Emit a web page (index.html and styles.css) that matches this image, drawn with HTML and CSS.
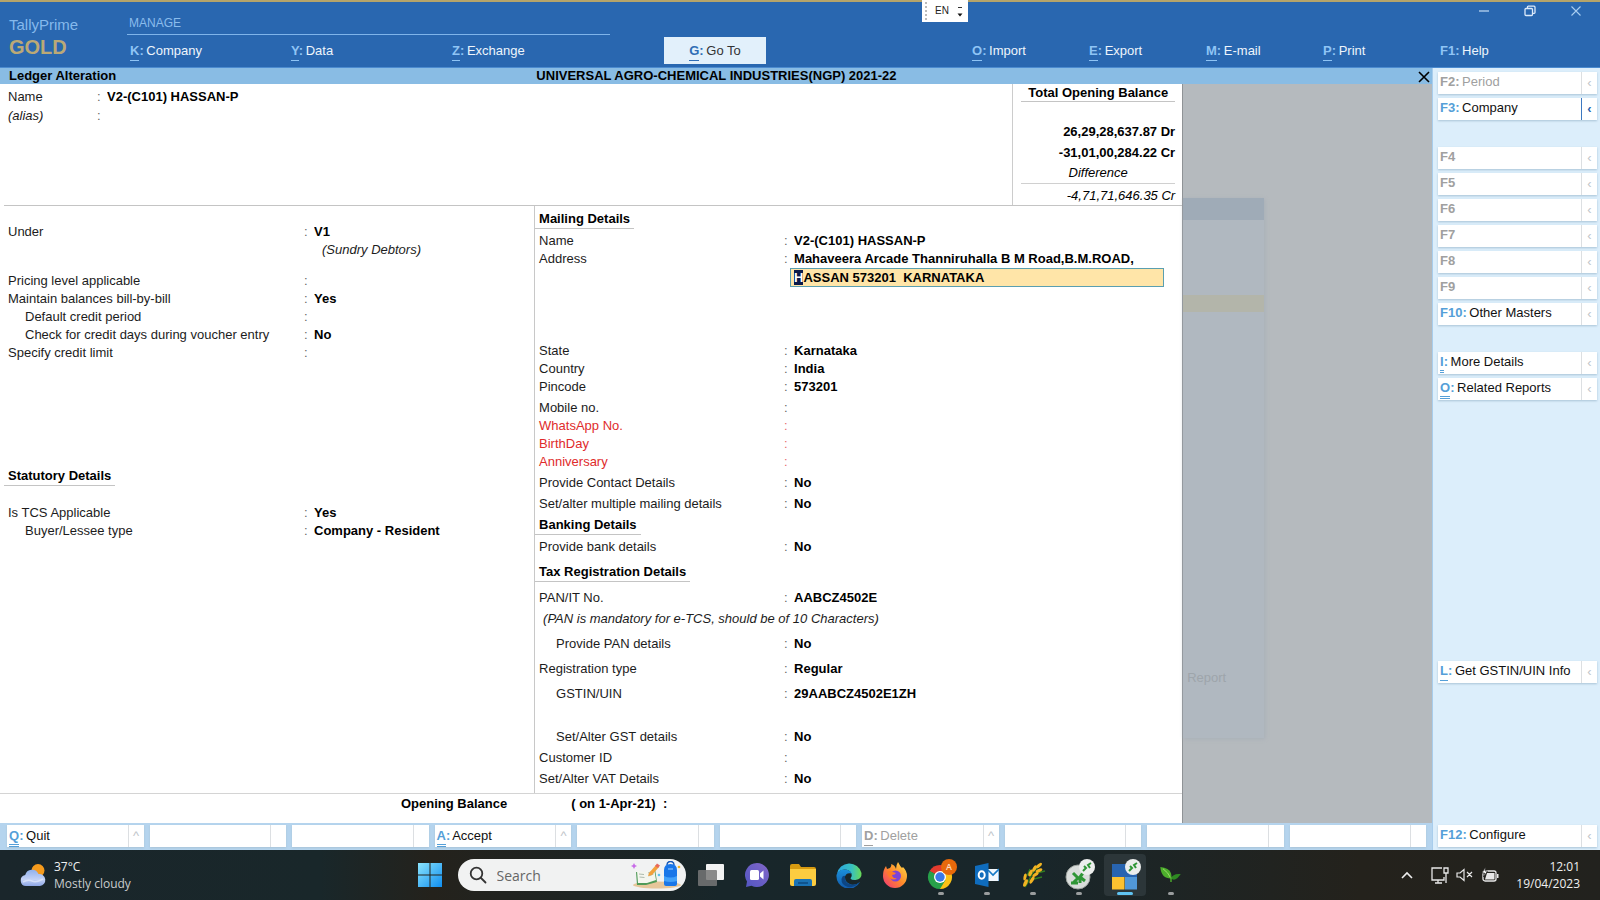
FILE: index.html
```html
<!DOCTYPE html>
<html lang="en">
<head>
    <meta charset="UTF-8">
    <meta name="viewport" content="width=device-width, initial-scale=1.0">
    <title>TallyPrime GOLD - Ledger Alteration</title>
    <link rel="stylesheet" href="styles.css">
</head>
<body>
    <!-- Top menu -->
    <header class="top-bar">
        <div class="brand">
            <span class="brand-name">TallyPrime</span>
            <span class="brand-edition">GOLD</span>
        </div>
        <nav class="manage">
            <h2>MANAGE</h2>
            <div class="manage-items">
                <button class="menu-item"><b><u>K</u>:</b> Company</button>
                <button class="menu-item"><b><u>Y</u>:</b> Data</button>
                <button class="menu-item"><b><u>Z</u>:</b> Exchange</button>
            </div>
        </nav>
        <button class="menu-item go-to"><b><u>G</u>:</b> Go To</button>
        <div class="top-right">
            <div class="window-controls">
                <button aria-label="Minimize"><svg width="12" height="12" viewBox="0 0 12 12"><path d="M1 6h10" stroke="#c4dcf5" stroke-width="1.2"/></svg></button>
                <button aria-label="Restore"><svg width="12" height="12" viewBox="0 0 12 12" fill="none" stroke="#dceafa" stroke-width="1.3"><rect x="1" y="3.5" width="7.5" height="7" rx="1"/><path d="M3.5 3.5V2q0-.8.8-.8H10q1 0 1 1V7.500q0 .8-.8.8H8.500"/></svg></button>
                <button aria-label="Close window"><svg width="12" height="12" viewBox="0 0 12 12"><path d="M1.500 1.500l9 9M10.500 1.500l-9 9" stroke="#a9cdf0" stroke-width="1.100"/></svg></button>
            </div>
            <nav class="right-items">
                <button class="menu-item"><b><u>O</u>:</b> Import</button>
                <button class="menu-item"><b><u>E</u>:</b> Export</button>
                <button class="menu-item"><b><u>M</u>:</b> E-mail</button>
                <button class="menu-item"><b><u>P</u>:</b> Print</button>
                <button class="menu-item"><b>F1:</b> Help</button>
            </nav>
        </div>
        <button class="lang-bar" aria-label="Input language">
            <span class="grip"></span>
            <span>EN</span>
            <svg width="6" height="12" viewBox="0 0 6 12"><path d="M1 2.500h4" stroke="#333"/><path d="M0.500 8.500h5l-2.500 3z" fill="#111"/></svg>
        </button>
    </header>

    <div class="workspace">
        <div class="screen">
            <div class="title-bar">
                <span>Ledger Alteration</span>
                <h1>UNIVERSAL AGRO-CHEMICAL INDUSTRIES(NGP) 2021-22</h1>
                <button class="close-screen" aria-label="Close">
                    <svg width="14" height="14" viewBox="0 0 14 14"><path d="M2 2l10 10M12 2L2 12" stroke="#000" stroke-width="1.600"/></svg>
                </button>
            </div>

            <div class="stage">
                <form class="ledger">
                    <div class="ledger-head">
                        <div class="name-fields">
                            <div class="field"><label for="name">Name</label><input id="name" value="V2-(C101) HASSAN-P"></div>
                            <div class="field"><label for="alias"><i>(alias)</i></label><input id="alias"></div>
                        </div>
                        <div class="opening">
                            <h3>Total Opening Balance</h3>
                            <p class="amount">26,29,28,637.87 Dr</p>
                            <p class="amount">-31,01,00,284.22 Cr</p>
                            <p class="difference">Difference</p>
                            <p class="net">-4,71,71,646.35 Cr</p>
                        </div>
                    </div>

                    <div class="ledger-body">
                        <section class="left-pane">
                            <div class="field"><label for="under">Under</label><input id="under" value="V1"></div>
                            <p class="group-note">(Sundry Debtors)</p>
                            <div class="field gap-l"><label for="pricing">Pricing level applicable</label><input id="pricing"></div>
                            <div class="field"><label for="billwise">Maintain balances bill-by-bill</label><input id="billwise" value="Yes"></div>
                            <div class="field sub"><label for="period">Default credit period</label><input id="period"></div>
                            <div class="field sub"><label for="check">Check for credit days during voucher entry</label><input id="check" value="No"></div>
                            <div class="field"><label for="limit">Specify credit limit</label><input id="limit"></div>

                            <h3 class="section-title statutory">Statutory Details</h3>
                            <div class="field gap-xl"><label for="tcs">Is TCS Applicable</label><input id="tcs" value="Yes"></div>
                            <div class="field sub"><label for="buyer">Buyer/Lessee type</label><input id="buyer" value="Company - Resident"></div>
                        </section>

                        <section class="right-pane">
                            <h3 class="section-title">Mailing Details</h3>
                            <div class="field gap-s"><label for="mail-name">Name</label><input id="mail-name" value="V2-(C101) HASSAN-P"></div>
                            <div class="field"><label for="address">Address</label><input id="address" value="Mahaveera Arcade Thanniruhalla B M Road,B.M.ROAD,"></div>
                            <input id="address-2" class="active-field" aria-label="Address line 2" value="HASSAN 573201  KARNATAKA" spellcheck="false">
                            <div class="field after-address"><label for="state">State</label><input id="state" value="Karnataka"></div>
                            <div class="field"><label for="country">Country</label><input id="country" value="India"></div>
                            <div class="field"><label for="pincode">Pincode</label><input id="pincode" value="573201"></div>
                            <div class="field gap-s"><label for="mobile">Mobile no.</label><input id="mobile"></div>
                            <div class="field custom"><label for="whatsapp">WhatsApp No.</label><input id="whatsapp"></div>
                            <div class="field custom"><label for="birthday">BirthDay</label><input id="birthday"></div>
                            <div class="field custom"><label for="anniversary">Anniversary</label><input id="anniversary"></div>
                            <div class="field gap-s"><label for="contact">Provide Contact Details</label><input id="contact" value="No"></div>
                            <div class="field gap-s"><label for="multi">Set/alter multiple mailing details</label><input id="multi" value="No"></div>

                            <h3 class="section-title gap-s">Banking Details</h3>
                            <div class="field gap-s"><label for="bank">Provide bank details</label><input id="bank" value="No"></div>

                            <h3 class="section-title gap-m">Tax Registration Details</h3>
                            <div class="field gap-m"><label for="pan">PAN/IT No.</label><input id="pan" value="AABCZ4502E"></div>
                            <p class="pan-note gap-s">(PAN is mandatory for e-TCS, should be of 10 Characters)</p>
                            <div class="field sub gap-m"><label for="pan-details">Provide PAN details</label><input id="pan-details" value="No"></div>
                            <div class="field gap-m"><label for="reg-type">Registration type</label><input id="reg-type" value="Regular"></div>
                            <div class="field sub gap-m"><label for="gstin">GSTIN/UIN</label><input id="gstin" value="29AABCZ4502E1ZH"></div>
                            <div class="field sub gap-xxl"><label for="gst-details">Set/Alter GST details</label><input id="gst-details" value="No"></div>
                            <div class="field gap-s"><label for="customer">Customer ID</label><input id="customer"></div>
                            <div class="field gap-s"><label for="vat">Set/Alter VAT Details</label><input id="vat" value="No"></div>
                        </section>
                    </div>

                    <div class="ledger-foot">
                        <label for="opening-balance"><span>Opening Balance</span><span>( on 1-Apr-21) &nbsp;:</span></label>
                        <input id="opening-balance">
                    </div>
                </form>

                <!-- Dimmed window below the ledger form -->
                <div class="backdrop">
                    <div class="dim-window">
                        <div class="dim-title"></div>
                        <div class="dim-selected"></div>
                        <span>Report</span>
                    </div>
                </div>
            </div>

            <div class="bottom-bar">
                <button class="key-btn"><span><b><u class="dbl">Q</u>:</b> Quit</span><i>^</i></button>
                <button class="key-btn" disabled aria-label="Empty"><span></span><i></i></button>
                <button class="key-btn" disabled aria-label="Empty"><span></span><i></i></button>
                <button class="key-btn"><span><b><u class="dbl">A</u>:</b> Accept</span><i>^</i></button>
                <button class="key-btn" disabled aria-label="Empty"><span></span><i></i></button>
                <button class="key-btn" disabled aria-label="Empty"><span></span><i></i></button>
                <button class="key-btn" disabled><span><b><u>D</u>:</b> Delete</span><i>^</i></button>
                <button class="key-btn" disabled aria-label="Empty"><span></span><i></i></button>
                <button class="key-btn" disabled aria-label="Empty"><span></span><i></i></button>
                <button class="key-btn" disabled aria-label="Empty"><span></span><i></i></button>
            </div>
        </div>

        <!-- Right button bar -->
        <aside class="side-bar">
            <button class="key-btn" disabled><span><b>F2:</b> Period</span><i>‹</i></button>
            <button class="key-btn current"><span><b>F3:</b> Company</span><i>‹</i></button>
            <button class="key-btn new-group" disabled><span><b>F4</b></span><i>‹</i></button>
            <button class="key-btn" disabled><span><b>F5</b></span><i>‹</i></button>
            <button class="key-btn" disabled><span><b>F6</b></span><i>‹</i></button>
            <button class="key-btn" disabled><span><b>F7</b></span><i>‹</i></button>
            <button class="key-btn" disabled><span><b>F8</b></span><i>‹</i></button>
            <button class="key-btn" disabled><span><b>F9</b></span><i>‹</i></button>
            <button class="key-btn"><span><b>F10:</b> Other Masters</span><i>‹</i></button>
            <button class="key-btn new-group"><span><b><u class="dbl">I</u>:</b> More Details</span><i>‹</i></button>
            <button class="key-btn"><span><b><u class="dbl">O</u>:</b> Related Reports</span><i>‹</i></button>
            <button class="key-btn gstin-info"><span><b><u>L</u>:</b> Get GSTIN/UIN Info</span><i>‹</i></button>
            <button class="key-btn configure"><span><b>F12:</b> Configure</span><i>‹</i></button>
        </aside>
    </div>

    <!-- Windows taskbar -->
    <footer class="taskbar">
        <button class="weather">
            <svg width="26" height="24" viewBox="0 0 26 24">
                <defs><linearGradient id="cloud" x1="0" y1="0" x2="0" y2="1"><stop offset="0" stop-color="#8fb0ec"/><stop offset=".6" stop-color="#c3d2f6"/><stop offset="1" stop-color="#8da6e6"/></linearGradient></defs>
                <circle cx="18" cy="7.500" r="6.500" fill="#f59a1c"/>
                <path d="M6 23a5.500 5.500 0 0 1-.8-10.900A7 7 0 0 1 18.500 11 6 6 0 0 1 20 23z" fill="url(#cloud)"/>
                <path d="M3 19q5-3 9-1t11-2" stroke="#e3eafc" stroke-width="1.500" fill="none" opacity=".7"/>
            </svg>
            <span><span>37°C</span><span class="condition">Mostly cloudy</span></span>
        </button>

        <div class="task-items">
            <button class="task" aria-label="Start">
                <svg width="26" height="26" viewBox="0 0 26 26">
                    <defs><linearGradient id="win" x1="0" y1="0" x2="1" y2="1"><stop offset="0" stop-color="#8be4fd"/><stop offset="1" stop-color="#0f8ef0"/></linearGradient></defs>
                    <path d="M1 1h11.500v11.500H1zM13.500 1H25v11.500H13.500zM1 13.500h11.500V25H1zM13.500 13.500H25V25H13.500z" fill="url(#win)"/>
                </svg>
            </button>
            <label class="search">
                <svg width="18" height="18" viewBox="0 0 18 18" fill="none" stroke="#333" stroke-width="1.800"><circle cx="7.500" cy="7.500" r="5.800"/><path d="M12 12l4.500 4.500" stroke-linecap="round"/></svg>
                <input type="search" placeholder="Search" aria-label="Search">
                <svg width="50" height="28" viewBox="0 0 50 28">
                    <ellipse cx="26" cy="24" rx="24" ry="3.500" fill="#e6c69a"/>
                    <path d="M3 2l1 2 2 1-2 1-1 2-1-2-2-1 2-1z" fill="#c86be8"/>
                    <path d="M5 11l9 1 10-4 2 13-11 3-9 0z" fill="#4f9a57"/>
                    <path d="M6 10l8 1 2 11-9 0zM14 11l9-4 2 12-9 3z" fill="#f4f6ee"/>
                    <path d="M8 13l5 .5M8.500 16l5 .5M17 12l5-2M17.500 15l5-2" stroke="#9aab9c" stroke-width=".8"/>
                    <path d="M18 12l7-8 3 2-7 8-4 1z" fill="#f2a13c"/><path d="M24 5l2-2.500 3 2L27 7z" fill="#e8695c"/>
                    <path d="M36 4q0-3.500 3.500-3.500T43 4" fill="none" stroke="#1558b8" stroke-width="1.500"/>
                    <path d="M33 9q0-6 6.500-6T46 9v14q0 2-2 2H35q-2 0-2-2z" fill="#1976e8"/>
                    <path d="M33 15q6.500 3 13 0v5q-6.500 2-13 0z" fill="#42a1fa"/><path d="M37 8h5" stroke="#9cd0ff"/>
                    <circle cx="48" cy="6" r="1.300" fill="#f0b429"/><circle cx="28" cy="14" r="1.300" fill="#5bc4ee"/>
                </svg>
            </label>
            <button class="task" aria-label="Task view">
                <svg width="26" height="24" viewBox="0 0 26 24"><rect x="8" y="1" width="18" height="16" rx="1" fill="#f2f2f2"/><rect x="0" y="7" width="19" height="16" rx="1" fill="#777" opacity=".85"/></svg>
            </button>
            <button class="task" aria-label="Chat">
                <svg width="24" height="24" viewBox="0 0 24 24">
                    <defs><linearGradient id="chat" x1="0" y1="1" x2="1" y2="0"><stop offset="0" stop-color="#5256c2"/><stop offset="1" stop-color="#8266c8"/></linearGradient></defs>
                    <path d="M12 0a12 12 0 1 1-5.500 22.700L1 24l1-5.500A12 12 0 0 1 12 0z" fill="url(#chat)"/>
                    <rect x="5" y="7" width="9" height="10" rx="1.500" fill="#fff"/><path d="M15 10.500l3.500-3v9l-3.500-3z" fill="#fff"/>
                </svg>
            </button>
            <button class="task" aria-label="File Explorer">
                <svg width="26" height="24" viewBox="0 0 26 24"><path d="M0 3q0-2 2-2h7l2 3h13q2 0 2 2v4H0z" fill="#d79a10"/><path d="M0 6h26v15q0 2-2 2H2q-2 0-2-2z" fill="#fccc40"/><path d="M4 23v-5q0-2 2-2h14q2 0 2 2v5z" fill="#1a72b4"/><path d="M8 20h10" stroke="#0c4a80" stroke-width="1.500"/></svg>
            </button>
            <button class="task" aria-label="Edge">
                <svg width="26" height="26" viewBox="0 0 26 26">
                    <defs>
                        <linearGradient id="edge-a" x1="0" y1="0" x2="1" y2="0"><stop offset="0" stop-color="#2aa5e0"/><stop offset=".6" stop-color="#38c0c0"/><stop offset="1" stop-color="#6adb55"/></linearGradient>
                        <linearGradient id="edge-b" x1="0" y1="0" x2="0" y2="1"><stop offset="0" stop-color="#1a8fdc"/><stop offset="1" stop-color="#1259a8"/></linearGradient>
                    </defs>
                    <path d="M1 12A12.500 12.500 0 0 1 25.500 11q.5 6-6 7-4 .3-5-1.500 2-2 1-5-2-4-7-4Q3 8 1 12z" fill="url(#edge-a)"/>
                    <path d="M.500 13Q2 8 8 7.500q6 0 7.500 4-5-1.500-6.500 3-.5 6 6 8 5 1 9-2.500A12.500 12.500 0 0 1 .500 13z" fill="url(#edge-b)"/>
                    <path d="M9 14q-1 7 6 8.500 5 .8 9-2.500-5 6-12 5-7-2-6.500-8Q6.500 13 9 14z" fill="#0d4583"/>
                </svg>
            </button>
            <button class="task" aria-label="Firefox">
                <svg width="26" height="26" viewBox="0 0 26 26">
                    <defs><linearGradient id="fox" x1="1" y1="0" x2="0" y2="1"><stop offset="0" stop-color="#ffe14a"/><stop offset=".5" stop-color="#ff8a2a"/><stop offset="1" stop-color="#f0307c"/></linearGradient></defs>
                    <path d="M1 14Q1 8 4 4l1 3 3-1Q10 3 9 2q4 1 5 5Q14 3 16 0q2 4 4 6l1-1q4 4 4 9a12 12 0 0 1-24 0z" fill="url(#fox)"/>
                    <circle cx="13.500" cy="14" r="5.500" fill="#7c43d8"/><path d="M5 10q3-2 6 0l3 1q-1 2-4 2 1 4 5 3-3 3-7 0-2-2-3-6z" fill="#ff7b28"/>
                </svg>
            </button>
            <button class="task open" aria-label="Chrome">
                <svg width="32" height="36" viewBox="0 0 32 36">
                    <path d="M15 20L4.600 14A12 12 0 0 1 25.400 14z" fill="#e33b2e"/><path d="M15 20V32A12 12 0 0 1 4.600 14z" fill="#27a04a"/><path d="M15 20L25.400 14A12 12 0 0 1 15 32z" fill="#fbc116"/><path d="M4.600 14l6 9 4.400-3zM15 32l5.500-9-5.500-3z" fill="#27a04a"/><path d="M15 14h10.400l-6 3z" fill="#fbc116"/>
                    <circle cx="15" cy="20" r="6" fill="#fff"/><circle cx="15" cy="20" r="4.700" fill="#3b79e8"/>
                    <circle cx="24" cy="10" r="8" fill="#e8690b"/><text x="24" y="13" text-anchor="middle" font-family="Open Sans, sans-serif" font-size="9" font-weight="600" fill="#ffdcc0">A</text>
                </svg>
            </button>
            <button class="task open" aria-label="Outlook">
                <svg width="24" height="24" viewBox="0 0 24 24"><rect x="10" y="6" width="14" height="12" fill="#1579c6"/><rect x="13" y="6" width="10.500" height="12" fill="#f2f8fd"/><path d="M13 7l5 5 6-6" fill="none" stroke="#1579c6" stroke-width="1.600"/><path d="M0 3l13.500-3v24L0 21z" fill="#0f6cbd"/><ellipse cx="6.700" cy="12" rx="3" ry="3.800" fill="none" stroke="#fff" stroke-width="2"/></svg>
            </button>
            <button class="task open" aria-label="Wheat">
                <svg width="26" height="26" viewBox="0 0 26 26"><path d="M21 3q-8 6-10 11t-6 11M25 9l-8 2-4 3M10 7l-2 5-3 3M22 15l-8 2" stroke="#2f7a22" stroke-width="1.500" fill="none"/><g fill="#f2b322"><ellipse cx="19" cy="3.500" rx="3.600" ry="1.600" transform="rotate(-40 19 3.500)"/><ellipse cx="14.500" cy="6.500" rx="3.600" ry="1.700" transform="rotate(-60 14.500 6.500)"/><ellipse cx="19" cy="8.500" rx="3.600" ry="1.600" transform="rotate(-25 19 8.500)"/><ellipse cx="10.500" cy="11" rx="3.600" ry="1.700" transform="rotate(-65 10.500 11)"/><ellipse cx="15.500" cy="12.500" rx="3.600" ry="1.600" transform="rotate(-35 15.500 12.500)"/><ellipse cx="5" cy="15" rx="3.600" ry="1.500" transform="rotate(-80 5 15)"/><ellipse cx="5.500" cy="21" rx="4" ry="1.800" transform="rotate(-65 5.500 21)"/><ellipse cx="12" cy="18" rx="4" ry="1.700" transform="rotate(-60 12 18)"/></g></svg>
            </button>
            <button class="task open" aria-label="Remote session">
                <svg width="32" height="36" viewBox="0 0 32 36"><circle cx="15" cy="20" r="12" fill="#d9dddb" stroke="#9ba19d"/><g stroke="#2f9636" stroke-width="3" fill="none"><path d="M10 16l5 5-5 5M8 26h7M20 16l-3 4 5 4M17 20v6"/></g><circle cx="24" cy="10" r="8" fill="#eceeed"/><path d="M21 9l2 2-3 3M28 6l-3 2 2 3" stroke="#2f9636" stroke-width="2" fill="none"/></svg>
            </button>
            <button class="task open active" aria-label="TallyPrime">
                <svg width="32" height="36" viewBox="0 0 32 36"><path d="M3 7h25v13H3z" fill="#2864b0"/><path d="M3 20h12.500v12.500H3z" fill="#fcc230"/><path d="M16 20h12v12.500H16z" fill="#5198d8"/><circle cx="24" cy="10" r="8" fill="#eceeed"/><path d="M21 9l2 2-3 3M28 6l-3 2 2 3" stroke="#2f9636" stroke-width="2" fill="none"/></svg>
            </button>
            <button class="task open" aria-label="Seedling">
                <svg width="22" height="16" viewBox="0 0 24 18"><path d="M0 0q10 1 12 7 1 3 0 6Q1 13 0 0z" fill="#4cae2c"/><path d="M3 2q6 4 9 11" stroke="#a6e070" fill="none"/><path d="M23 8q-9-1-11 5 5 4 11-5z" fill="#2e8a22"/><path d="M12 11v6" stroke="#4cae2c" stroke-width="1.600"/></svg>
            </button>
        </div>

        <div class="tray">
            <button aria-label="Show hidden icons"><svg width="14" height="10" viewBox="0 0 14 10"><path d="M2 8l5-5 5 5" fill="none" stroke="#eee" stroke-width="1.600"/></svg></button>
            <button class="tray-status" aria-label="Network, volume and battery">
                <svg width="18" height="18" viewBox="0 0 18 18" fill="none" stroke="#e8e8e8" stroke-width="1.300"><path d="M11 2H1v12h12v-3M7 14v3M4 17h7M13 2h4v5h-4zM15 7v10"/></svg>
                <svg width="18" height="14" viewBox="0 0 18 14" fill="none" stroke="#e8e8e8" stroke-width="1.200"><path d="M1 5h3l4-3.500v11L4 9H1zM11 4l5 5M16 4l-5 5"/></svg>
                <svg width="18" height="16" viewBox="0 0 18 16"><rect x="2" y="4" width="13" height="10" rx="2" fill="none" stroke="#e8e8e8" stroke-width="1.300"/><path d="M4 12.500l2-6.500h7.500v6.500z" fill="#e8e8e8"/><path d="M16 7h1.500v4H16z" fill="#e8e8e8"/><path d="M4.500 0L1 6h2.500L2.500 10 6.500 4H4z" fill="#fff" stroke="#22231f" stroke-width=".7"/></svg>
            </button>
            <button class="clock"><span>12:01</span><span>19/04/2023</span></button>
        </div>
    </footer>

    <script src="script.js"></script>
</body>
</html>
```
FILE: styles.css
```css
* {
    box-sizing: border-box;
    margin: 0;
    padding: 0;
}

body {
    display: flex;
    flex-direction: column;
    height: 100vh;
    overflow: hidden;
    font-family: "Liberation Sans", Arial, sans-serif;
    font-size: 13px;
    line-height: 18px;
    color: #1c1c1c;
}

button {
    font: inherit;
    color: inherit;
    background: none;
    border: none;
    text-align: left;
    cursor: pointer;
}

button svg {
    display: block;
}

input {
    font: inherit;
    font-weight: bold;
    color: #000;
    background: none;
    border: none;
    outline: none;
    min-width: 0;
}

h1, h2, h3 {
    font-size: 13px;
}

u {
    text-decoration: none;
    border-bottom: 1px solid currentColor;
    padding-bottom: 2px;
}

u.dbl {
    border-bottom: 3px double currentColor;
    padding-bottom: 1px;
}

/* Top menu */
.top-bar {
    position: relative;
    display: grid;
    grid-template-columns: 127px 483fr 54fr 102fr 203fr 631fr;
    height: 68px;
    flex-shrink: 0;
    background-color: #2967b0;
    border-top: 2px solid #b5a46a;
    border-bottom: 1px solid #4b8bd0;
    color: #eef5fc;
}

.brand {
    display: flex;
    flex-direction: column;
    padding: 14px 0 0 9px;
}

.brand-name {
    font-size: 15px;
    color: #85b9ec;
}

.brand-edition {
    font-size: 20px;
    line-height: 26px;
    font-weight: bold;
    color: #bba976;
}

.manage h2 {
    font-size: 12px;
    font-weight: normal;
    color: #8bbcec;
    padding: 12px 0 2px 2px;
    border-bottom: 1px solid #7fb4ea;
}

.manage-items {
    display: grid;
    grid-template-columns: repeat(3, 1fr);
}

.menu-item {
    height: 32px;
    padding-left: 3px;
}

.menu-item b {
    margin-right: -1px;
    color: #8fc4f5;
}

.go-to {
    grid-column: 4;
    align-self: end;
    height: 27px;
    margin-bottom: 3px;
    padding: 0;
    text-align: center;
    background-color: #e2f0fb;
    color: #333;
}

.go-to b {
    color: #2f6db5;
}

.top-right {
    grid-column: 6;
}

.window-controls {
    display: flex;
    justify-content: flex-end;
    gap: 34px;
    height: 33px;
    padding: 3px 18px 0 0;
}

.window-controls button {
    height: 12px;
}

.right-items {
    display: grid;
    grid-template-columns: repeat(4, 117fr) 163fr;
}

.lang-bar {
    position: absolute;
    top: -2px;
    left: 922px;
    display: flex;
    align-items: center;
    justify-content: space-between;
    width: 46px;
    height: 22px;
    padding: 0 5px 0 3px;
    background-color: #fff;
    color: #222;
    font-size: 10px;
}

.grip {
    height: 18px;
    border-left: 2px dotted #bbb;
}

/* Main area */
.workspace {
    display: flex;
    flex: 1;
    min-height: 0;
}

.screen {
    display: flex;
    flex-direction: column;
    flex: 1;
    min-width: 0;
}

.title-bar {
    display: grid;
    grid-template-columns: 523fr auto 530fr;
    align-items: center;
    height: 16px;
    padding: 0 1px 0 9px;
    background-color: #89bce4;
    color: #000;
    font-weight: bold;
    line-height: 16px;
}

.title-bar span, .title-bar h1 {
    padding-bottom: 2px;
}

.close-screen {
    justify-self: end;
}

.stage {
    display: flex;
    flex: 1;
    min-height: 0;
}

.ledger {
    display: flex;
    flex-direction: column;
    flex: 1183;
    min-width: 0;
    background-color: #fff;
    border-right: 1px solid #8f9396;
}

.ledger-head {
    display: flex;
    justify-content: space-between;
    height: 122px;
    margin-left: 4px;
    border-bottom: 1px solid #c4c4c4;
}

.name-fields {
    padding: 4px 0 0 4px;
}

.name-fields .field + .field {
    margin-top: 1px;
}

.opening {
    width: 170px;
    padding: 0 7px 0 8px;
    border-left: 1px solid #ccc;
    color: #000;
}

.opening h3 {
    text-align: center;
    line-height: 17px;
    border-bottom: 1px solid #c4c4c4;
    margin-bottom: 19px;
}

.amount, .net {
    text-align: right;
    line-height: 21px;
}

.amount {
    font-weight: bold;
}

.difference {
    text-align: center;
    font-style: italic;
    line-height: 20px;
    border-bottom: 1px solid #d0d0d0;
}

.net {
    font-style: italic;
    padding-top: 1px;
}

.ledger-body {
    display: grid;
    grid-template-columns: 534fr 648fr;
    flex: 1;
    border-bottom: 1px solid #d4d4d4;
}

.left-pane {
    padding: 17px 0 0 8px;
}

.right-pane {
    border-left: 1px solid #c8c8c8;
    padding: 4px 0 0 4px;
}

/* label, colon and value of one ledger line */
.field {
    display: flex;
    height: 18px;
}

.field label {
    display: flex;
    justify-content: space-between;
    flex-shrink: 0;
}

.field label::after {
    content: ":";
    width: 10px;
    opacity: 0.7;
}

.field input {
    flex: 1;
}

.name-fields label {
    width: 99px;
}

.left-pane label {
    width: 306px;
}

.right-pane label {
    width: 255px;
}

.field.sub label {
    padding-left: 17px;
}

.custom {
    color: #e02b2b;
}

.gap-s { margin-top: 3px; }
.gap-m { margin-top: 7px; }
.gap-l { margin-top: 13px; }
.gap-xl { margin-top: 18px; }
.gap-xxl { margin-top: 25px; }

.group-note, .pan-note {
    font-style: italic;
}

.group-note {
    padding-left: 314px;
}

.pan-note {
    padding-left: 4px;
}

.section-title {
    width: max-content;
    color: #000;
    margin-left: -4px;
    padding: 0 4px;
    border-bottom: 1px solid #c4c4c4;
}

.statutory {
    margin-top: 105px;
}

.active-field {
    display: block;
    width: 374px;
    height: 19px;
    margin-left: 251px;
    padding-left: 3px;
    background-color: #ffe5a8;
    border: 1px solid #5a9fb0;
}

.active-field::selection {
    background-color: #0a1a4a;
    color: #fff;
}

.after-address {
    margin-top: 55px;
}

.ledger-foot {
    display: flex;
    height: 29px;
    padding: 1px 0 0 401px;
    color: #000;
    font-weight: bold;
}

.ledger-foot label {
    display: flex;
    gap: 64px;
}

.backdrop {
    flex: 249;
    background-color: #b5babe;
}

.dim-window {
    width: 81px;
    height: 540px;
    margin-top: 114px;
    background-color: #b0b8c0;
    box-shadow: 1px 1px 4px #a8b0b8;
    color: #9ea5ab;
}

.dim-title {
    height: 22px;
    background-color: #9fabb7;
}

.dim-selected {
    height: 17px;
    margin: 75px 0 357px;
    background-color: #b3b5aa;
}

.dim-window span {
    padding-left: 4px;
}

/* Function key buttons */
.key-btn {
    display: flex;
    height: 22px;
    background-color: #fff;
    box-shadow: 0 1px 2px #a9c3d6;
    color: #111;
    line-height: 20px;
    white-space: nowrap;
}

.key-btn b {
    margin-right: -1px;
    color: #559fd8;
}

.key-btn span {
    flex: 1;
    padding-left: 2px;
}

.key-btn i {
    width: 16px;
    height: 22px;
    border-left: 1px solid #dcdfe2;
    color: #c0c5ca;
    font-style: normal;
    line-height: 22px;
    text-align: center;
}

.key-btn:disabled, .key-btn:disabled b {
    color: #a0a0a0;
}

.key-btn.current i {
    border-color: #3d78c0;
    color: #2864b0;
    font-weight: bold;
}

.bottom-bar {
    display: grid;
    grid-template-columns: repeat(10, 1fr);
    gap: 6px;
    padding: 2px 6px 3px 7px;
    background-color: #b5d4ee;
}

.bottom-bar .key-btn {
    line-height: 22px;
}

.side-bar {
    display: flex;
    flex-direction: column;
    gap: 4px;
    width: 168px;
    padding: 4px 3px 3px 5px;
    background-color: #dceefb;
    border-left: 1px solid #a8cdec;
}

.new-group {
    margin-top: 23px;
}

.gstin-info {
    margin-top: 257px;
}

.configure {
    margin-top: auto;
}

/* Taskbar */
.taskbar {
    display: grid;
    grid-template-columns: 1fr auto 1fr;
    height: 50px;
    flex-shrink: 0;
    background: linear-gradient(90deg, #1a262b, #19272a 20%, #24221c 27%, #18262a 45%, #19262a 65%, #24221c 85%, #22221e);
    font-family: "Open Sans", "Segoe UI", sans-serif;
    font-size: 12px;
    line-height: 17px;
    color: #f0f0f0;
}

.weather {
    display: flex;
    align-items: center;
    gap: 8px;
    padding-left: 20px;
}

.weather span {
    display: block;
}

.weather .condition {
    color: #c9cccd;
}

.task-items {
    display: flex;
    align-items: center;
}

.task {
    position: relative;
    display: flex;
    align-items: center;
    justify-content: center;
    width: 46px;
    height: 50px;
}

.task.open::after {
    content: "";
    position: absolute;
    bottom: 5px;
    left: 20px;
    width: 6px;
    height: 3px;
    border-radius: 2px;
    background-color: #9a9d9e;
}

.task.active {
    width: 42px;
    height: 42px;
    margin: 0 2px;
    border-radius: 4px;
    background-color: #2c3639;
}

.task.active::after {
    bottom: 1px;
    left: 13px;
    width: 16px;
    background-color: #60c4f2;
}

.search {
    display: flex;
    align-items: center;
    gap: 10px;
    width: 228px;
    height: 32px;
    margin: 0 2px 0 5px;
    padding: 0 5px 0 11px;
    border-radius: 16px;
    background-color: #f1f2f2;
}

.search input {
    flex: 1;
    font-size: 14px;
    font-weight: normal;
}

.search input::placeholder {
    color: #666;
}

.tray {
    display: flex;
    align-items: center;
    justify-content: flex-end;
    padding-right: 20px;
}

.tray-status {
    display: flex;
    align-items: center;
    gap: 7px;
    margin: 0 17px 0 17px;
}

.clock span {
    display: block;
    text-align: right;
}
```
FILE: script.js
```js
// put the block cursor on the first letter of the field being edited
const field = document.getElementById("address-2");
field.focus();
field.setSelectionRange(0, 1);
```
